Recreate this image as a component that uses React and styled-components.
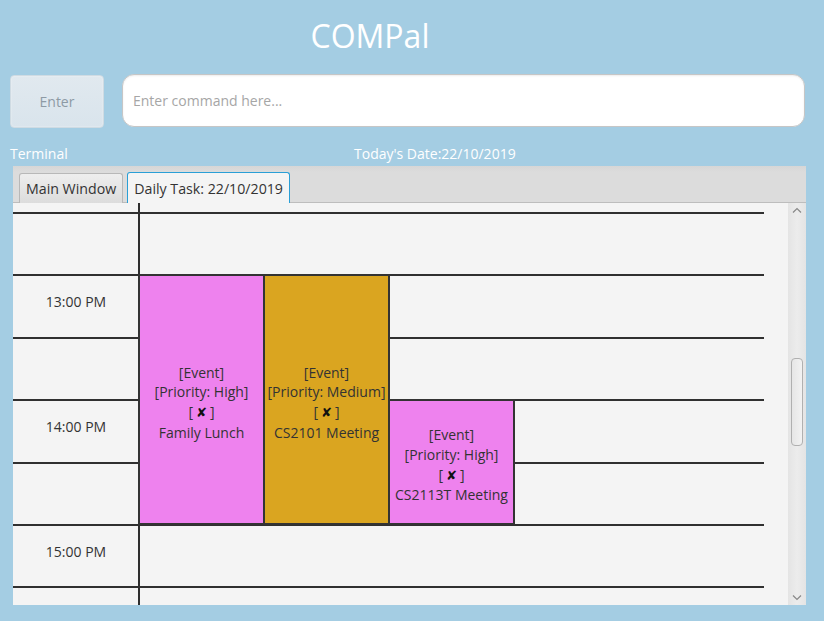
import React from "react";
import styled, { createGlobalStyle } from "styled-components";

const GlobalStyle = createGlobalStyle`
    html, body {
        margin: 0;
        padding: 0;
        background: #a4cde3;
    }
    body {
        font-family: "Open Sans", "Noto Sans", sans-serif;
    }
`

const events = [
    { col: 2, from: 3, to: 7, color: '#ee82ee', priority: 'High', name: 'Family Lunch' },
    { col: 3, from: 3, to: 7, color: '#daa520', priority: 'Medium', name: 'CS2101 Meeting' },
    { col: 4, from: 5, to: 7, color: '#ee82ee', priority: 'High', name: 'CS2113T Meeting' },
]

const times = [
    { row: 3, label: '13:00 PM' },
    { row: 5, label: '14:00 PM' },
    { row: 7, label: '15:00 PM' },
]

const App = () => {
    return(
        <>
            <GlobalStyle/>
            <Page>
                <Title>COMPal</Title>

                <CommandRow>
                    <EnterButton>Enter</EnterButton>
                    <CommandInput placeholder="Enter command here..."/>
                </CommandRow>

                <InfoRow>
                    <InfoLabel>Terminal</InfoLabel>
                    <InfoLabel>Today's Date:22/10/2019</InfoLabel>
                </InfoRow>

                <TabPane>
                    <TabHeader>
                        <Tab>Main Window</Tab>
                        <Tab selected>Daily Task: 22/10/2019</Tab>
                    </TabHeader>

                    <TabBody>
                        <Schedule>
                            <TimeColumn/>
                            {[2, 3, 4, 5, 6, 7, 8].map(r => <RowLine key={r} row={r}/>)}
                            {times.map(t => <TimeLabel key={t.label} row={t.row}>{t.label}</TimeLabel>)}
                            {events.map(e => (
                                <EventBox key={e.name} col={e.col} from={e.from} to={e.to} color={e.color}>
                                    <span>[Event]</span>
                                    <span>[Priority: {e.priority}]</span>
                                    <span>[<Cross>✘</Cross>]</span>
                                    <span>{e.name}</span>
                                </EventBox>
                            ))}
                        </Schedule>

                        <ScrollBar>
                            <Arrow>
                                <svg width="10" height="6" viewBox="0 0 10 6">
                                    <path d="M1 5.5 L5 1.5 L9 5.5" fill="none" stroke="#888" strokeWidth="1.2"/>
                                </svg>
                            </Arrow>
                            <Track>
                                <Thumb/>
                            </Track>
                            <Arrow>
                                <svg width="10" height="6" viewBox="0 0 10 6">
                                    <path d="M1 0.5 L5 4.5 L9 0.5" fill="none" stroke="#888" strokeWidth="1.2"/>
                                </svg>
                            </Arrow>
                        </ScrollBar>
                    </TabBody>
                </TabPane>
            </Page>
        </>
    )
}

const Page = styled.div`
    width: 824px;
    height: 621px;
    display: flex;
    flex-direction: column;
    background-color: #a4cde3;
    overflow: hidden;
`

const Title = styled.h1`
    margin: 0;
    height: 74px;
    display: flex;
    align-items: center;
    justify-content: center;
    padding: 0 84px 4px 0;
    font-family: "Open Sans", sans-serif;
    font-weight: 400;
    font-size: 32px;
    color: white;
    box-sizing: border-box;
`

const CommandRow = styled.div`
    display: flex;
    align-items: flex-start;
    gap: 18px;
    padding: 0 19px 0 10px;
`

const EnterButton = styled.button`
    width: 94px;
    height: 53px;
    margin-top: 1px;
    border: 1px solid #cfdbe3;
    border-radius: 4px;
    background: linear-gradient(#e1e9ef, #d9e4ec);
    color: #8d9aa5;
    font-family: "Open Sans", sans-serif;
    font-size: 14px;
    box-shadow: inset 0 0 2px rgba(255, 255, 255, 0.6);
`

const CommandInput = styled.input`
    flex: 1;
    height: 53px;
    box-sizing: border-box;
    border: 1px solid #c6c6c6;
    border-radius: 12px;
    background: white;
    padding: 0 10px;
    font-family: "Open Sans", sans-serif;
    font-size: 14px;
    outline: none;
    box-shadow: inset 0 1px 2px rgba(0, 0, 0, 0.08);

    &::placeholder {
        color: #a6a6a6;
    }
`

const InfoRow = styled.div`
    display: flex;
    padding: 15px 0 2px 10px;
    height: 21px;
    align-items: center;

    & > :first-child {
        width: 344px;
    }
`

const InfoLabel = styled.span`
    font-family: "Open Sans", sans-serif;
    font-size: 14px;
    color: white;
`

const TabPane = styled.div`
    flex: 1;
    margin: 0 18px 16px 13px;
    display: flex;
    flex-direction: column;
    min-height: 0;
`

const TabHeader = styled.div`
    height: 37px;
    box-sizing: border-box;
    display: flex;
    align-items: flex-end;
    gap: 4px;
    padding-left: 6px;
    background: linear-gradient(#d6d6d6, #dcdcdc 6px);
    border-bottom: 1px solid #bdbdbd;
`

const Tab = styled.div`
    height: ${props => props.selected ? '31px' : '30px'};
    box-sizing: border-box;
    display: flex;
    align-items: center;
    padding: 0 6px;
    margin-bottom: -1px;
    border: 1px solid ${props => props.selected ? '#2a9fd6' : '#b8b8b8'};
    border-bottom: none;
    border-radius: 3px 3px 0 0;
    background: ${props => props.selected ? '#f4f4f4' : 'linear-gradient(#eeeeee, #dcdcdc)'};
    font-family: "Open Sans", sans-serif;
    font-size: 14.2px;
    color: #333;
`

const TabBody = styled.div`
    flex: 1;
    display: flex;
    background: #f4f4f4;
    min-height: 0;
`

const Schedule = styled.div`
    width: 775px;
    display: grid;
    grid-template-columns: 126px 125px 125px 125px 250px 24px;
    grid-template-rows: 10px 62px 63px 62px 63px 62px 62px 1fr;
    overflow: hidden;
`

const TimeColumn = styled.div`
    grid-column: 1;
    grid-row: 1 / -1;
    border-right: 2px solid #2e2e2e;
    margin-right: -1px;
`

const RowLine = styled.div`
    grid-column: 1 / 6;
    grid-row: ${props => props.row};
    border-top: 2px solid #303030;
    margin-top: -1px;
`

const TimeLabel = styled.div`
    grid-column: 1;
    grid-row: ${props => props.row};
    display: flex;
    align-items: center;
    justify-content: center;
    padding-bottom: 10px;
    font-family: "Open Sans", sans-serif;
    font-size: 14px;
    color: #333;
`

const EventBox = styled.div`
    grid-column: ${props => props.col};
    grid-row: ${props => props.from} / ${props => props.to};
    z-index: 1;
    margin: -1px -1px 0 -1px;
    padding-top: 6px;
    display: flex;
    flex-direction: column;
    align-items: center;
    justify-content: center;
    border: 2px solid #333;
    background: ${props => props.color};
    font-family: "Open Sans", sans-serif;
    font-size: 14px;
    line-height: 19.6px;
    color: #333;
    text-align: center;
    white-space: nowrap;
`

const Cross = styled.span`
    font-family: "DejaVu Sans", sans-serif;
    font-weight: bold;
    color: #111;
    padding: 0 3px;
    font-size: 13px;
`

const ScrollBar = styled.div`
    width: 18px;
    display: flex;
    flex-direction: column;
    background: linear-gradient(90deg, #e4e4e4, #ececec 50%, #e4e4e4);
`

const Arrow = styled.div`
    height: 14px;
    display: flex;
    align-items: center;
    justify-content: center;
`

const Track = styled.div`
    flex: 1;
    padding-top: 141px;
`

const Thumb = styled.div`
    width: 12px;
    height: 88px;
    margin-left: 3px;
    box-sizing: border-box;
    border: 1px solid #b0b0b0;
    border-radius: 4px;
    background: linear-gradient(90deg, #e6e6e6, #f2f2f2);
`

export default App
